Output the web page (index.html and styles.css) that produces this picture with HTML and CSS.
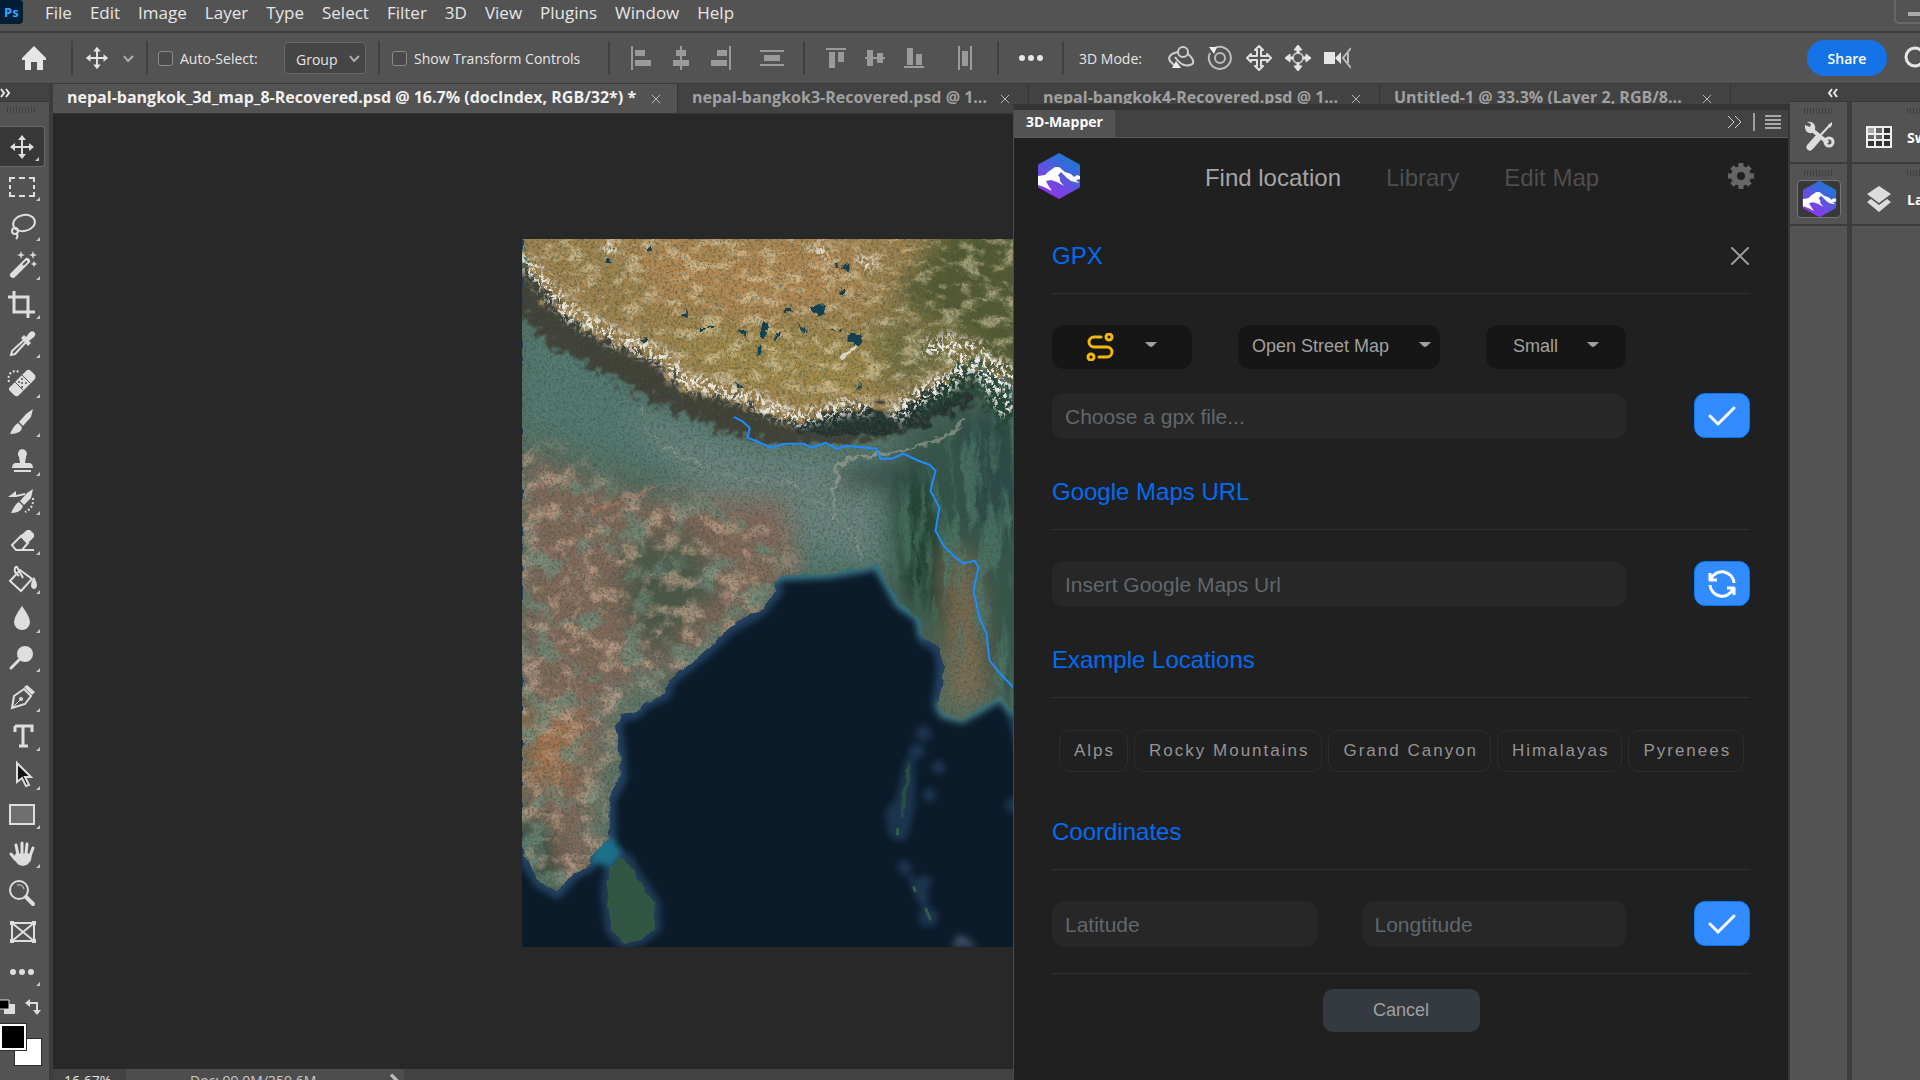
FILE: index.html
```html
<!DOCTYPE html>
<html lang="en">
<head>
  <meta charset="utf-8">
  <title>3D-Mapper</title>
  <link rel="stylesheet" href="styles.css">
</head>
<body>
  <!-- Shared symbols -->
  <svg class="defs" width="0" height="0" aria-hidden="true">
    <defs>
      <linearGradient id="logoFill" x1="0.2" y1="1" x2="0.8" y2="0">
        <stop offset="0" stop-color="#9a2fee"/>
        <stop offset="0.5" stop-color="#5a55de"/>
        <stop offset="1" stop-color="#0f80d0"/>
      </linearGradient>
    </defs>
    <symbol id="logo" viewBox="0 0 44 48">
      <path d="M22 1 42 12Q43 12.500 43 14V34Q43 35.500 42 36L22 47 2 36Q1 35.500 1 34V14Q1 12.500 2 12Z" fill="url(#logoFill)"/>
      <path d="M1 24 8 23 11 20 18 15 22 15 28 20 34 22 37 25 40 23 43 24 43 27 39 28 42 31 34 29 30 26 24 20 21 23 23 26 23 29 27 34 20 30 14 28 9 29 11 33 15 39 7 35 1 33Z" fill="#fff"/>
    </symbol>
    <symbol id="move" viewBox="0 0 30 30">
      <path d="M15 7V23M7 15H23" stroke="currentColor" stroke-width="2"/>
      <path d="M15 3 19 8H11ZM15 27 11 22H19ZM3 15 8 11V19ZM27 15 22 19V11Z" fill="currentColor"/>
    </symbol>
    <symbol id="check" viewBox="0 0 30 30">
      <path d="M3 15 11 23 27 7" fill="none" stroke="#fff" stroke-width="3" stroke-linecap="round" stroke-linejoin="round"/>
    </symbol>
    <symbol id="caret" viewBox="0 0 12 6">
      <path d="M0 0H12L8 4Q6 6 4 4Z" fill="currentColor"/>
    </symbol>
    <symbol id="close" viewBox="0 0 12 12">
      <path d="M1 1 11 11M11 1 1 11" stroke="currentColor" fill="none"/>
    </symbol>
  </svg>

  <div class="app">
    <header class="menubar">
      <div class="ps-logo">Ps</div>
      <nav class="menu">
        <a href="#">File</a>
        <a href="#">Edit</a>
        <a href="#">Image</a>
        <a href="#">Layer</a>
        <a href="#">Type</a>
        <a href="#">Select</a>
        <a href="#">Filter</a>
        <a href="#">3D</a>
        <a href="#">View</a>
        <a href="#">Plugins</a>
        <a href="#">Window</a>
        <a href="#">Help</a>
      </nav>
      <button class="minimize" aria-label="Minimize"></button>
    </header>

    <div class="options">
      <div class="opt-group opt-home">
        <button class="icon-btn" aria-label="Home">
          <svg width="26" height="26" viewBox="0 0 26 26"><path d="M13 1 25 13V15H22V25H16V17H10V25H4V15H1V13Z" fill="currentColor"/></svg>
        </button>
      </div>
      <div class="opt-group opt-move">
        <button class="icon-btn" aria-label="Move tool presets">
          <svg width="28" height="28"><use href="#move"/></svg>
          <svg width="11" height="7" viewBox="0 0 11 7"><path d="M1 1 5 6 10 1" fill="none" stroke="#b0b0b0" stroke-width="2"/></svg>
        </button>
      </div>
      <div class="opt-group opt-auto">
        <label class="check"><input type="checkbox">Auto-Select:</label>
        <div class="group-select">
          <select aria-label="Auto-select target"><option>Group</option></select>
          <svg width="11" height="7" viewBox="0 0 11 7"><path d="M1 1 5 6 10 1" fill="none" stroke="#b0b0b0" stroke-width="2"/></svg>
        </div>
      </div>
      <div class="opt-group opt-transform">
        <label class="check"><input type="checkbox">Show Transform Controls</label>
      </div>
      <div class="opt-group opt-align">
        <button class="icon-btn" aria-label="Align left"><svg width="24" height="30" viewBox="0 0 24 30"><path d="M2 3V27" stroke="#9a9a9a" stroke-width="2"/><path d="M5 7H15V13H5ZM5 17H21V23H5Z" fill="#9a9a9a"/></svg></button>
        <button class="icon-btn" aria-label="Align centers"><svg width="24" height="30" viewBox="0 0 24 30"><path d="M12 3V27" stroke="#9a9a9a" stroke-width="2"/><path d="M7 7H17V13H7ZM4 17H20V23H4Z" fill="#9a9a9a"/></svg></button>
        <button class="icon-btn" aria-label="Align right"><svg width="24" height="30" viewBox="0 0 24 30"><path d="M22 3V27" stroke="#9a9a9a" stroke-width="2"/><path d="M9 7H19V13H9ZM3 17H19V23H3Z" fill="#9a9a9a"/></svg></button>
        <button class="icon-btn distribute" aria-label="Distribute"><svg width="26" height="30" viewBox="0 0 26 30"><path d="M1 8H25M1 22H25" stroke="#9a9a9a" stroke-width="2"/><path d="M5 12H21V18H5Z" fill="#9a9a9a"/></svg></button>
      </div>
      <div class="opt-group opt-valign">
        <button class="icon-btn" aria-label="Align top"><svg width="24" height="30" viewBox="0 0 24 30"><path d="M2 6H22" stroke="#9a9a9a" stroke-width="2"/><path d="M5 9H11V25H5ZM14 9H20V19H14Z" fill="#9a9a9a"/></svg></button>
        <button class="icon-btn" aria-label="Align middles"><svg width="24" height="30" viewBox="0 0 24 30"><path d="M2 15H22" stroke="#9a9a9a" stroke-width="2"/><path d="M4 7H10V23H4ZM14 10H20V20H14Z" fill="#9a9a9a"/></svg></button>
        <button class="icon-btn" aria-label="Align bottom"><svg width="24" height="30" viewBox="0 0 24 30"><path d="M2 24H22" stroke="#9a9a9a" stroke-width="2"/><path d="M5 5H11V22H5ZM14 11H20V22H14Z" fill="#9a9a9a"/></svg></button>
        <button class="icon-btn distribute" aria-label="Distribute widths"><svg width="24" height="30" viewBox="0 0 24 30"><path d="M6 3V27M18 3V27" stroke="#9a9a9a" stroke-width="2"/><path d="M9 8H15V23H9Z" fill="#9a9a9a"/></svg></button>
      </div>
      <div class="opt-group opt-more">
        <button class="icon-btn" aria-label="More options"><svg width="26" height="8" viewBox="0 0 26 8"><g fill="currentColor"><circle cx="4" cy="4" r="3"/><circle cx="13" cy="4" r="3"/><circle cx="22" cy="4" r="3"/></g></svg></button>
      </div>
      <div class="opt-group opt-3d">
        <span>3D Mode:</span>
        <button class="icon-btn" aria-label="Orbit"><svg width="28" height="28" viewBox="0 0 28 28" fill="none" stroke="#cfcfcf" stroke-width="2"><circle cx="16" cy="8" r="5"/><path d="M11 8C2 10 1 14 3 17L7 21M21 10C27 15 28 20 23 21 17 23 12 19 8 13"/><path d="M5 24H14L9 17Z" fill="#eee" stroke="none"/></svg></button>
        <button class="icon-btn" aria-label="Roll"><svg width="28" height="28" viewBox="0 0 28 28" fill="none" stroke="#bdbdbd" stroke-width="2"><circle cx="14" cy="14" r="5"/><path d="M9 4A11 11 0 1 1 4 9"/><path d="M3 3H11L8 10Z" fill="#eee" stroke="none"/></svg></button>
        <button class="icon-btn" aria-label="Pan"><svg width="28" height="28" viewBox="0 0 28 28" fill="none" stroke="#e0e0e0" stroke-width="2" stroke-linejoin="round"><path d="M14 2 18 6H16V12H22V10L26 14 22 18V16H16V22H18L14 26 10 22H12V16H6V18L2 14 6 10V12H12V6H10Z"/></svg></button>
        <button class="icon-btn" aria-label="Slide"><svg width="28" height="28" viewBox="0 0 28 28" fill="none" stroke="#bdbdbd" stroke-width="2"><circle cx="14" cy="14" r="5"/><path d="M14 1 18 6H15V9H13V6H10ZM14 27 10 22H13V19H15V22H18ZM1 14 6 10V13H9V15H6V18ZM27 14 22 18V15H19V13H22V10Z" fill="#e6e6e6" stroke="#e6e6e6" stroke-width="1"/></svg></button>
        <button class="icon-btn" aria-label="Camera"><svg width="28" height="28" viewBox="0 0 28 28"><path d="M1 8H12V20H1ZM12 14 18 8V20Z" fill="#e6e6e6"/><path d="M28 4 20 14 28 24M25 9V19" fill="none" stroke="#bdbdbd" stroke-width="2"/></svg></button>
      </div>
      <button class="share">Share</button>
      <button class="icon-btn search" aria-label="Search"><svg width="26" height="26" viewBox="0 0 26 26" fill="none" stroke="currentColor" stroke-width="3"><circle cx="12" cy="12" r="9"/><path d="M18 18 25 25"/></svg></button>
    </div>

    <div class="workspace">
      <aside class="toolbar">
        <div class="dock-head"><svg width="12" height="10" viewBox="0 0 12 10"><path d="M1 1 4 5 1 9M6 1 9 5 6 9" fill="none" stroke="#e6e6e6" stroke-width="2"/></svg></div>
        <div class="grip"></div>
        <div class="tools">
          <button class="tool active" aria-label="Move"><svg viewBox="0 0 30 30"><use href="#move"/></svg></button>
          <button class="tool" aria-label="Marquee"><svg viewBox="0 0 30 30"><path d="M3 10V6H8M12 6H18M22 6H27V10M27 13V17M27 20V24H22M18 24H12M8 24H3V20M3 17V13" fill="none" stroke="currentColor" stroke-width="2"/></svg></button>
          <button class="tool" aria-label="Lasso"><svg viewBox="0 0 30 30" fill="none" stroke="currentColor" stroke-width="2"><ellipse cx="17" cy="12" rx="11" ry="8" transform="rotate(-12 17 12)"/><circle cx="8" cy="20" r="3"/><path d="M9 22Q12 25 9 28"/></svg></button>
          <button class="tool" aria-label="Magic wand"><svg viewBox="0 0 30 30"><path d="M6 25 20 11" stroke="currentColor" stroke-width="6" stroke-linecap="round"/><path d="M16 15 20 11" stroke="#535353" stroke-width="2"/><path d="M14 1 15 4 18 5 15 6 14 9 13 6 10 5 13 4ZM26 1 27 4 30 5 27 6 26 9 25 6 22 5 25 4ZM27 11 28 13 30 14 28 15 27 17 26 15 24 14 26 13Z" fill="currentColor"/></svg></button>
          <button class="tool" aria-label="Crop"><svg viewBox="0 0 30 30"><path d="M7 1V22H28M1 7H21V28" fill="none" stroke="currentColor" stroke-width="3"/></svg></button>
          <button class="tool" aria-label="Eyedropper"><svg viewBox="0 0 30 30"><path d="M17 11 5 22 4 26 8 25 19 13" fill="none" stroke="currentColor" stroke-width="2"/><path d="M14 9 17 6 19 8 23 3Q26 1 28 4 29 6 27 8L22 12 24 14 21 17Z" fill="currentColor"/></svg></button>
          <button class="tool" aria-label="Healing brush"><svg viewBox="0 0 30 30"><path d="M2 20 20 2Q22 1 24 3L28 7Q29 9 28 11L11 28Q9 29 7 27L2 22Z" fill="currentColor"/><path d="M8 14 16 22M15 7 23 15" stroke="#535353"/><g fill="#535353"><circle cx="15" cy="11" r="1"/><circle cx="12" cy="14" r="1"/><circle cx="15" cy="15" r="1"/><circle cx="19" cy="15" r="1"/><circle cx="15" cy="19" r="1"/></g><path d="M2 14C0 6 5 1 13 4" fill="none" stroke="currentColor" stroke-width="2" stroke-dasharray="2 2"/></svg></button>
          <button class="tool" aria-label="Brush"><svg viewBox="0 0 30 30"><path d="M26 2 24 10 16 19 12 15 19 7ZM11 16 15 20Q15 27 3 27 7 18 11 16Z" fill="currentColor"/></svg></button>
          <button class="tool" aria-label="Clone stamp"><svg viewBox="0 0 30 30"><path d="M15 3A5 5 0 0 1 19 11L18 17H23Q26 18 26 22H5Q5 18 8 17H13L12 11A5 5 0 0 1 15 3ZM7 24H24V26H7Z" fill="currentColor"/></svg></button>
          <button class="tool" aria-label="History brush"><svg viewBox="0 0 30 30"><path d="M26 3 24 12 17 19 13 15 20 7ZM12 16 16 20Q14 27 4 27 8 18 12 16ZM1 11 9 5V9L18 7V9L9 11Z" fill="currentColor"/><path d="M26 12Q27 22 18 26" fill="none" stroke="currentColor" stroke-width="2" stroke-dasharray="2 2"/></svg></button>
          <button class="tool" aria-label="Eraser"><svg viewBox="0 0 30 30"><path d="M5 20 14 11 21 18 15 25H9Z" fill="none" stroke="currentColor" stroke-width="2"/><path d="M13 11 20 5H23L27 9V12L20 19ZM9 24H27V26H9Z" fill="currentColor"/></svg></button>
          <button class="tool" aria-label="Paint bucket"><svg viewBox="0 0 30 30" fill="none" stroke="currentColor" stroke-width="2"><path d="M13 6 25 15 14 27 3 17Z"/><path d="M16 14 10 3Q7 2 8 8L12 12"/><path d="M27 15Q31 23 27 24 23 23 27 15Z" fill="currentColor"/></svg></button>
          <button class="tool" aria-label="Blur"><svg viewBox="0 0 30 30"><path d="M15 3Q23 14 23 19A8 8 0 0 1 7 19Q7 14 15 3Z" fill="currentColor"/></svg></button>
          <button class="tool" aria-label="Dodge"><svg viewBox="0 0 30 30"><circle cx="18" cy="11" r="8" fill="currentColor"/><path d="M12 17 4 25" stroke="currentColor" stroke-width="3" stroke-linecap="round"/></svg></button>
          <button class="tool" aria-label="Pen"><svg viewBox="0 0 30 30"><path d="M5 26 7 14 17 7 24 14 18 22Z" fill="none" stroke="currentColor" stroke-width="2"/><path d="M17 5 20 3 28 10 25 13Z" fill="currentColor"/><circle cx="14" cy="17" r="2" fill="currentColor"/><path d="M5 26 14 17" stroke="currentColor"/></svg></button>
          <button class="tool" aria-label="Type"><svg viewBox="0 0 30 30"><path d="M8 5H25V11M8 11V5M16 5V25M12 25H21" fill="none" stroke="currentColor" stroke-width="3"/></svg></button>
          <button class="tool" aria-label="Path selection"><svg viewBox="0 0 30 30"><path d="M10 3V22L15 18 19 26 22 25 18 17H24Z" fill="#111" stroke="currentColor" stroke-width="2"/></svg></button>
          <button class="tool" aria-label="Rectangle"><svg viewBox="0 0 30 30"><path d="M3 5H27V24H3Z" fill="#6e6e6e" stroke="currentColor" stroke-width="2"/></svg></button>
          <button class="tool" aria-label="Hand"><svg viewBox="0 0 30 30" fill="none" stroke="currentColor" stroke-width="3" stroke-linecap="round"><path d="M11 16 9 6M15 15V4M19 15 20 5M23 17 26 9M8 20 4 15"/><path d="M9 15H24Q25 24 18 26 11 28 7 19Z" fill="currentColor" stroke-width="1"/></svg></button>
          <button class="tool no-sub" aria-label="Zoom"><svg viewBox="0 0 30 30" fill="none" stroke="currentColor"><circle cx="12" cy="12" r="9" stroke-width="2"/><path d="M19 19 26 26" stroke-width="4" stroke-linecap="round"/><path d="M10 7Q16 6 17 11"/></svg></button>
          <button class="tool no-sub" aria-label="Frame"><svg viewBox="0 0 30 30"><path d="M5 6H27V24H5ZM5 6 27 24M27 6 5 24" fill="none" stroke="currentColor" stroke-width="2"/><path d="M3 4H7V8H3ZM25 4H29V8H25ZM3 22H7V26H3ZM25 22H29V26H25Z" fill="currentColor"/></svg></button>
          <button class="tool" aria-label="Edit toolbar"><svg viewBox="0 0 30 30" fill="currentColor"><circle cx="6" cy="15" r="3"/><circle cx="15" cy="15" r="3"/><circle cx="24" cy="15" r="3"/></svg></button>
        </div>
        <div class="color-tools">
          <svg width="16" height="16" viewBox="0 0 16 16"><path d="M4 5H15V15H4Z" fill="#ddd"/><path d="M-1 1H9V10H-1Z" fill="#000" stroke="#ddd"/></svg>
          <svg width="16" height="16" viewBox="0 0 16 16"><path d="M4 4H12V12" fill="none" stroke="#ddd" stroke-width="2"/><path d="M0 4 5 0V8ZM12 16 8 11H16Z" fill="#ddd"/></svg>
        </div>
        <div class="swatches">
          <button class="swatch back" aria-label="Background color"></button>
          <button class="swatch fore" aria-label="Foreground color"></button>
        </div>
      </aside>

      <main class="document">
        <div class="tabs">
          <div class="tab tab-wide active"><span>nepal-bangkok_3d_map_8-Recovered.psd @ 16.7% (docIndex, RGB/32*) *</span><button aria-label="Close tab"><svg width="10" height="10"><use href="#close"/></svg></button></div>
          <div class="tab"><span>nepal-bangkok3-Recovered.psd @ 1...</span><button aria-label="Close tab"><svg width="10" height="10"><use href="#close"/></svg></button></div>
          <div class="tab"><span>nepal-bangkok4-Recovered.psd @ 1...</span><button aria-label="Close tab"><svg width="10" height="10"><use href="#close"/></svg></button></div>
          <div class="tab"><span>Untitled-1 @ 33.3% (Layer 2, RGB/8...</span><button aria-label="Close tab"><svg width="10" height="10"><use href="#close"/></svg></button></div>
        </div>

        <div class="canvas">
          <svg class="map" viewBox="0 0 800 709" role="img" aria-label="Satellite map with route">
            <defs>
              <filter id="soft" x="-20%" y="-20%" width="140%" height="140%"><feGaussianBlur stdDeviation="12"/></filter>
              <filter id="soft2" x="-20%" y="-20%" width="140%" height="140%"><feGaussianBlur stdDeviation="3"/></filter>
              <!-- ragged edge for ridges -->
              <filter id="rough" x="-10%" y="-10%" width="120%" height="120%">
                <feTurbulence type="fractalNoise" baseFrequency="0.12" numOctaves="5" seed="4" result="n"/>
                <feDisplacementMap in="SourceGraphic" in2="n" scale="34" xChannelSelector="R" yChannelSelector="G"/>
                <feGaussianBlur stdDeviation="1"/>
              </filter>
              <filter id="coastEdge" x="-5%" y="-5%" width="110%" height="110%">
                <feTurbulence type="fractalNoise" baseFrequency="0.08" numOctaves="3" seed="9" result="n"/>
                <feDisplacementMap in="SourceGraphic" in2="n" scale="7" xChannelSelector="R" yChannelSelector="G"/>
              </filter>
              <!-- speckle that is densest in the middle of a blurred stroke -->
              <filter id="snowy" x="-10%" y="-10%" width="120%" height="120%">
                <feGaussianBlur in="SourceGraphic" stdDeviation="4" result="b"/>
                <feTurbulence type="fractalNoise" baseFrequency="0.26 0.2" numOctaves="4" seed="7" result="n"/>
                <feColorMatrix in="n" type="matrix" values="0 0 0 0 0.84  0 0 0 0 0.83  0 0 0 0 0.8  8 0 0 0 -3.9" result="s"/>
                <feComposite in="s" in2="b" operator="in"/>
              </filter>
              <filter id="grain" x="0" y="0" width="100%" height="100%">
                <feTurbulence type="fractalNoise" baseFrequency="0.4" numOctaves="4" seed="3"/>
                <feColorMatrix type="matrix" values="0 0 0 0 0.05  0 0 0 0 0.09  0 0 0 0 0.06  3 0 0 0 -1.3"/>
              </filter>
              <filter id="blotch" x="0" y="0" width="100%" height="100%">
                <feTurbulence type="fractalNoise" baseFrequency="0.03 0.035" numOctaves="7" seed="12"/>
                <feColorMatrix type="matrix" values="0 0 0 0 0.16  0 0 0 0 0.27  0 0 0 0 0.21  0 5 0 0 -2.6"/>
              </filter>
              <filter id="clay" x="0" y="0" width="100%" height="100%">
                <feTurbulence type="fractalNoise" baseFrequency="0.05 0.06" numOctaves="7" seed="31"/>
                <feColorMatrix type="matrix" values="0 0 0 0 0.66  0 0 0 0 0.44  0 0 0 0 0.32  0 4 0 0 -1.9"/>
              </filter>
              <filter id="light" x="0" y="0" width="100%" height="100%">
                <feTurbulence type="fractalNoise" baseFrequency="0.05 0.09" numOctaves="6" seed="21"/>
                <feColorMatrix type="matrix" values="0 0 0 0 0.86  0 0 0 0 0.72  0 0 0 0 0.46  0 0 4 0 -1.9"/>
              </filter>
              <!-- north-south hill ranges -->
              <filter id="ranges" x="0" y="0" width="100%" height="100%">
                <feTurbulence type="fractalNoise" baseFrequency="0.09 0.015" numOctaves="5" seed="17"/>
                <feColorMatrix type="matrix" values="0 0 0 0 0.08  0 0 0 0 0.2  0 0 0 0 0.15  0 5 0 0 -2.3"/>
              </filter>
              <path id="coast" d="M0-20V600L2 619 18 644 35 654 52 635 68 627 67 619 88 599 87 562 99 539 97 512 94 489 98 475 112 475 122 465 143 455 147 442 162 430 182 414 208 389 238 372 255 352 250 343 258 337 305 335 342 329 355 325 365 342 378 365 398 379 402 399 418 409 422 429 417 465 422 475 440 480 455 472 480 457 492 475 505 520 800 560V-20Z"/>
              <path id="lanka" d="M95 617 104 621 112 635 132 665 133 689 120 700 102 704 90 692 85 655 88 632Z"/>
              <path id="plateau" d="M0-20V22L38 72 88 102 138 125 162 152 202 159 228 165 248 175 278 182 295 174 325 169 348 165 372 175 395 155 422 142 455 119 491 145 800 145V-20Z"/>
              <clipPath id="landClip"><use href="#coast"/><use href="#lanka"/></clipPath>
              <clipPath id="plateauClip"><use href="#plateau"/></clipPath>
              <mask id="indiaMask" maskUnits="userSpaceOnUse" x="0" y="0" width="500" height="709"><path d="M-20 200Q60 215 110 250L180 260 260 290 270 330 240 390 160 440 95 480 90 530 80 650H-20Z" fill="#fff" filter="url(#soft)"/></mask>
              <mask id="eastMask" maskUnits="userSpaceOnUse" x="300" y="0" width="500" height="709"><path d="M365 260 420 200 480 160 820 150V540L490 480 430 400 370 340Z" fill="#fff" filter="url(#soft)"/></mask>
            </defs>
            <rect width="800" height="709" fill="#0c1b29"/>
            <!-- shallow water -->
            <g fill="none" stroke-linejoin="round" filter="url(#soft2)">
              <use href="#coast" stroke="#233f5f" stroke-width="13"/>
              <use href="#lanka" stroke="#203a57" stroke-width="13"/>
              <path d="M250 343 258 337 305 335 342 329 355 325 365 342 378 365 398 379 402 399" stroke="#3b8288" stroke-width="6"/>
              <path d="M417 465 422 475 440 480 455 472 480 457 492 475" stroke="#4b8b84" stroke-width="5"/>
              <path d="M74 602 90 599 100 612 90 628 68 624Z" fill="#1f6f88"/>
            </g>
            <g fill="#1a3450" filter="url(#soft2)">
              <circle cx="402" cy="495" r="8"/><circle cx="395" cy="513" r="8"/>
              <circle cx="417" cy="529" r="7"/><circle cx="408" cy="557" r="7"/>
              <path d="M384 520Q395 515 394 535L393 570 386 600Q372 608 366 592L364 572 374 562Z"/>
              <circle cx="383" cy="629" r="7"/><circle cx="403" cy="644" r="7"/><circle cx="407" cy="679" r="10"/>
              <path d="M384 632 396 664 407 675 407 650Z"/>
              <path d="M430 709 436 696 444 698 456 709Z" fill="#3a4a60"/>
              <circle cx="492" cy="567" r="8"/>
            </g>
            <path d="M388 525 384 550 380 578" fill="none" stroke="#28503f" stroke-width="4" filter="url(#coastEdge)"/>
            <path d="M376 590V597M404 670 409 682M392 648 394 654" stroke="#2f5d4c" stroke-width="3"/>

            <g filter="url(#coastEdge)">
            <g clip-path="url(#landClip)">
              <rect y="-20" width="800" height="740" fill="#536b60"/>
              <g filter="url(#soft)">
                <path d="M0 50 120 150 240 200 380 205 370 330 250 340 180 250 0 190Z" fill="#557a73"/>
                <path d="M100 170 240 215 360 220 355 320 300 310 180 260Z" fill="#6b837e"/>
                <path d="M0 215 110 260 260 260 280 330 160 430 90 470 80 640 0 640Z" fill="#83695a"/>
                <path d="M0 480 60 470 50 540 0 550Z" fill="#a57350"/>
                <path d="M100 300 170 290 200 350 130 430 100 370Z" fill="#4e5948"/>
                <path d="M85 450 150 430 120 465 90 540 90 600 60 610 80 500Z" fill="#66786c"/>
                <path d="M0 570 30 590 40 650 0 640Z" fill="#2d4a3c"/>
                <path d="M365 250 385 200 500 150 800 140V500L480 470 440 400 380 370Z" fill="#34554b"/>
                <path d="M375 260 410 240 420 300 425 440 410 390 375 340Z" fill="#1b3f2e"/>
                <path d="M425 310 450 320 465 460 430 470Z" fill="#866f52"/>
                <path d="M430 170 500 190 500 310 450 290Z" fill="#2b4a47"/>
                <path d="M320 228H400V248H320Z" fill="#243a36"/>
                <use href="#lanka" fill="#2f5942"/>
              </g>
              <g mask="url(#indiaMask)">
                <rect width="500" height="709" filter="url(#clay)" opacity="0.6"/>
                <rect width="500" height="709" filter="url(#blotch)" opacity="0.7"/>
              </g>
              <g mask="url(#eastMask)">
                <rect x="300" width="500" height="709" filter="url(#ranges)" opacity="0.7"/>
              </g>
              <!-- dark foothills under the ridge -->
              <path d="M-10 40 45 95 100 122 145 147 190 167 250 188 300 190 350 182 400 160 450 145" fill="none" stroke="#3f3a33" stroke-width="38" filter="url(#rough)" opacity="0.9"/>
              <path d="M280 192 350 187 400 168 450 150" fill="none" stroke="#22312e" stroke-width="32" filter="url(#rough)"/>
              <g filter="url(#rough)">
                <use href="#plateau" fill="#a1834f"/>
              </g>
              <g clip-path="url(#plateauClip)">
                <g filter="url(#soft)">
                  <path d="M100 0H340V60L240 80 130 60Z" fill="#b48953"/>
                  <path d="M130 90 360 100 340 160 220 150Z" fill="#a48b4c"/>
                  <path d="M370 60 430-20H800V150H480L440 95Z" fill="#545a31"/>
                  <path d="M350 80 450 90 420 140 360 150Z" fill="#74713f"/>
                </g>
                <rect width="500" height="200" filter="url(#light)" opacity="0.5"/>
              </g>
              <rect width="800" height="709" filter="url(#grain)" opacity="0.55"/>
              <path d="M400 175 440 125 460 125 500 170 480 190 450 150Z" fill="#234233" filter="url(#rough)" opacity="0.8"/>
              <!-- snow -->
              <g fill="none" stroke="#fff" filter="url(#snowy)">
                <path d="M0 16 30 55 50 75 88 96 138 116 162 142 202 152 228 160 248 170 278 180 325 168 350 168" stroke-width="17"/>
                <path d="M370 178 400 155 435 138 450 112 400 108M420 102 455 115 500 145M455 120 480 160 490 175" stroke-width="20"/>
                <path d="M80 5 95 15M335 20 355 30M295 5 305 18" stroke-width="12"/>
              </g>
              <path d="M320 120 334 106" stroke="#d9d4c6" stroke-width="3"/>
              <!-- lakes -->
              <g fill="#12404f" filter="url(#coastEdge)">
                <path d="M286 70 300 66 306 74 296 80ZM326 96H342L334 106 326 105ZM240 84H246L242 98H238ZM215 92 225 94 224 101ZM118 99 128 98 124 104ZM158 76 166 74V79ZM181 87H190V90H181ZM275 85 286 92 285 95ZM262 71H270V74H262ZM320 28 328 22V29ZM54 13 66 20ZM125 8H132V12H125ZM330 152 340 146V150ZM215 145H221V149H215Z"/>
                <path d="M252 90 260 94 252 98ZM308 92H318V94H308ZM86 20H90V24H86ZM314 24H318V29H314ZM316 50H322V53H316ZM236 108H240V114H236Z"/>
              </g>
              <!-- rivers -->
              <g fill="none" stroke="#a3a596" opacity="0.6" filter="url(#coastEdge)">
                <path d="M120 165 122 190 140 205 195 235 240 242 270 245 310 275 335 300 340 325"/>
                <path d="M445 180 420 200 370 215 335 218 316 228 312 250 314 278" stroke-width="3"/>
                <path d="M70 275 130 248" stroke="#b07a5a" stroke-width="2"/>
              </g>
              <use href="#lanka" fill="#2f5743"/>
              <rect x="80" y="610" width="60" height="99" filter="url(#grain)" opacity="0.4"/>
            </g>
            </g>
            <path class="route" d="M212 178 220 182 228 189 226 199 236 203 250 209 262 205 282 205 290 209 304 204 315 210 325 207 355 210 359 220 370 220 382 215 397 222 408 226 414 232 409 252 418 269 414 292 422 307 432 317 442 325 453 322 457 329 452 352 458 379 465 395 468 422 477 433 490 447 520 470"/>
          </svg>
        </div>

        <div class="status">
          <span class="zoom">16.67%</span>
          <span class="doc-size">Doc: 99.9M/359.6M</span>
          <svg width="8" height="12" viewBox="0 0 8 12"><path d="M1 1 6 6 1 11" fill="none" stroke="#bbb" stroke-width="2"/></svg>
        </div>

        <section class="panel">
          <div class="panel-tabs">
            <div class="panel-tab">3D-Mapper</div>
            <div class="panel-actions">
              <svg width="16" height="14" viewBox="0 0 16 14"><path d="M1 1 7 7 1 13M8 1 14 7 8 13" fill="none" stroke="currentColor"/></svg>
              <span class="bar"></span>
              <svg width="16" height="14" viewBox="0 0 16 14"><path d="M0 1H16M0 5H16M0 9H16M0 13H16" stroke="#a8a8a8" stroke-width="2"/></svg>
            </div>
          </div>

          <div class="panel-body">
            <div class="panel-head">
              <svg width="44" height="48"><use href="#logo"/></svg>
              <nav class="panel-nav">
                <a href="#" class="current">Find location</a>
                <a href="#">Library</a>
                <a href="#">Edit Map</a>
              </nav>
              <button class="gear" aria-label="Settings">
                <svg width="28" height="28" viewBox="0 0 28 28"><circle cx="14" cy="14" r="7" fill="none" stroke="#666" stroke-width="6"/><g stroke="#666" stroke-width="5"><path d="M14 1V5M14 23V27M1 14H5M23 14H27M5 5 8 8M20 20 23 23M5 23 8 20M20 8 23 5"/></g></svg>
              </button>
            </div>

            <form class="sections">
              <section class="section">
                <div class="section-title">
                  <h2>GPX</h2>
                  <button type="button" class="dismiss" aria-label="Close"><svg width="20" height="20" viewBox="0 0 20 20"><path d="M2 2 18 18M18 2 2 18" stroke="#9b9b9b" stroke-width="2" stroke-linecap="round"/></svg></button>
                </div>
                <div class="selects">
                  <div class="dropdown route-style">
                    <svg class="route-icon" width="28" height="28" viewBox="0 0 28 28" fill="none" stroke="#f5b80c" stroke-width="3" stroke-linecap="round"><circle cx="23" cy="4" r="3"/><circle cx="5" cy="24" r="3"/><path d="M15 4H8A5 5 0 0 0 8 14H21A5 5 0 0 1 21 24H13"/></svg>
                    <select aria-label="Route style"><option></option></select>
                    <svg class="caret" width="12" height="6"><use href="#caret"/></svg>
                  </div>
                  <div class="dropdown provider">
                    <select aria-label="Map provider"><option>Open Street Map</option></select>
                    <svg class="caret" width="12" height="6"><use href="#caret"/></svg>
                  </div>
                  <div class="dropdown size">
                    <select aria-label="Size"><option>Small</option></select>
                    <svg class="caret" width="12" height="6"><use href="#caret"/></svg>
                  </div>
                </div>
                <div class="row">
                  <div class="fields"><input type="text" aria-label="GPX file" placeholder="Choose a gpx file..."></div>
                  <button type="button" class="go" aria-label="Load file"><svg width="30" height="30"><use href="#check"/></svg></button>
                </div>
              </section>

              <section class="section">
                <div class="section-title"><h2>Google Maps URL</h2></div>
                <div class="row">
                  <div class="fields"><input type="text" aria-label="Google Maps URL" placeholder="Insert Google Maps Url"></div>
                  <button type="button" class="go" aria-label="Load URL"><svg width="30" height="30" viewBox="0 0 30 30" fill="none" stroke="#fff" stroke-width="3" stroke-linejoin="round"><path d="M3 4V11H10M4 10A12 12 0 0 1 27 14M27 26V19H20M26 20A12 12 0 0 1 3 16"/></svg></button>
                </div>
              </section>

              <section class="section">
                <div class="section-title"><h2>Example Locations</h2></div>
                <div class="chips">
                  <button type="button">Alps</button>
                  <button type="button">Rocky Mountains</button>
                  <button type="button">Grand Canyon</button>
                  <button type="button">Himalayas</button>
                  <button type="button">Pyrenees</button>
                </div>
              </section>

              <section class="section">
                <div class="section-title"><h2>Coordinates</h2></div>
                <div class="row">
                  <div class="fields">
                    <input type="text" aria-label="Latitude" placeholder="Latitude">
                    <input type="text" aria-label="Longtitude" placeholder="Longtitude">
                  </div>
                  <button type="button" class="go" aria-label="Go to coordinates"><svg width="30" height="30"><use href="#check"/></svg></button>
                </div>
              </section>

              <div class="footer"><button type="button" class="cancel">Cancel</button></div>
            </form>
          </div>
        </section>
      </main>

      <aside class="dock">
        <div class="dock-head"><svg width="12" height="10" viewBox="0 0 12 10"><path d="M5 1 2 5 5 9M10 1 7 5 10 9" fill="none" stroke="#e6e6e6" stroke-width="2"/></svg></div>
        <div class="dock-columns">
          <div class="dock-col narrow">
            <div class="dock-cell">
              <div class="grip"></div>
              <button class="dock-btn" aria-label="Tool presets"><svg width="32" height="32" viewBox="0 0 32 32"><path d="M8 8 25 22" stroke="#ddd" stroke-width="4"/><path d="M2 4 7 6 8 3 4 1Q10 0 12 5 13 9 9 12 3 13 2 7Z" fill="#ddd"/><circle cx="26" cy="21" r="4" fill="none" stroke="#ddd" stroke-width="3"/><path d="M7 26 14 18" stroke="#ddd" stroke-width="7" stroke-linecap="round"/><path d="M14 18 27 4" stroke="#ddd" stroke-width="2"/><path d="M25 4 29 1 29 4 27 7Z" fill="#ddd"/></svg></button>
            </div>
            <div class="dock-cell">
              <div class="grip"></div>
              <button class="dock-btn pressed" aria-label="3D-Mapper"><svg width="35" height="38"><use href="#logo"/></svg></button>
            </div>
          </div>
          <div class="dock-col">
            <div class="dock-cell">
              <div class="grip"></div>
              <button class="dock-btn labelled"><svg width="26" height="22" viewBox="0 0 26 22"><path d="M1 1H25V21H1Z" fill="#333" stroke="#eee" stroke-width="2"/><path d="M2 2H9V8H2Z" fill="#aaa"/><path d="M9 2H17V14H2V8H9Z" fill="#666"/><path d="M1 8H25M1 14H25M9 1V21M17 1V21" stroke="#eee" stroke-width="2"/></svg>Swatches</button>
            </div>
            <div class="dock-cell">
              <div class="grip"></div>
              <button class="dock-btn labelled"><svg width="26" height="26" viewBox="0 0 26 26"><path d="M13 0 25 8 13 17 1 8ZM1 16 5 13 13 19 21 13 25 16 13 26Z" fill="#ddd"/></svg>Layers</button>
            </div>
          </div>
        </div>
      </aside>
    </div>
  </div>
</body>
</html>
```
FILE: styles.css
```css
* {
  box-sizing: border-box;
}

body {
  margin: 0;
  background: #535353;
  color: #e6e6e6;
  font-family: "Open Sans", "Noto Sans", sans-serif;
  font-size: 14px;
  overflow: hidden;
}

button,
input,
select {
  font: inherit;
  color: inherit;
  margin: 0;
}

button {
  background: none;
  border: none;
  padding: 0;
  cursor: pointer;
}

a {
  color: inherit;
  text-decoration: none;
}

svg {
  display: block;
  flex: none;
}

.defs {
  position: absolute;
}

.app {
  display: flex;
  flex-direction: column;
  height: 100vh;
}

/* Menu bar */
.menubar {
  display: flex;
  align-items: flex-start;
  height: 33px;
  border-bottom: 2px solid #3c3c3c;
  overflow: hidden;
}

.ps-logo {
  width: 23px;
  height: 24px;
  background: #001e36;
  color: #31a8ff;
  border-radius: 0 4px 4px 0;
  font-size: 13px;
  font-weight: 700;
  line-height: 24px;
  padding-left: 4px;
}

.menu {
  display: flex;
  gap: 18px;
  margin-left: 22px;
  font-size: 17px;
  line-height: 26px;
}

.minimize {
  width: 26px;
  height: 24px;
  margin-left: auto;
  border: 2px solid #686868;
  border-width: 0 0 2px 2px;
  border-radius: 0 0 0 5px;
  display: flex;
  justify-content: flex-end;
  align-items: center;
  padding-top: 5px;
}

.minimize::after {
  content: "";
  width: 12px;
  height: 4px;
  background: #aaa;
}

/* Options bar */
.options {
  display: flex;
  align-items: center;
  height: 51px;
  flex: none;
  border-bottom: 1px solid #3c3c3c;
  overflow: hidden;
}

.opt-group {
  display: flex;
  align-items: center;
  height: 34px;
  border-right: 2px solid #404040;
  flex: none;
}

.icon-btn {
  display: flex;
  align-items: center;
  gap: 12px;
  flex: none;
}

.opt-home {
  width: 73px;
  padding-left: 21px;
}

.opt-move {
  width: 75px;
  padding-left: 10px;
}

.opt-auto {
  width: 232px;
  padding-left: 10px;
  justify-content: space-between;
  padding-right: 12px;
}

.opt-transform {
  width: 230px;
  padding-left: 12px;
}

.opt-align {
  width: 195px;
  padding-left: 20px;
  gap: 15px;
}

.opt-valign {
  width: 194px;
  padding-left: 19px;
  gap: 15px;
}

.opt-align .distribute {
  margin-left: 12px;
}

.opt-valign .distribute {
  margin-left: 12px;
}

.opt-more {
  width: 65px;
  padding-left: 19px;
}

.opt-3d {
  border: none;
  padding-left: 15px;
  gap: 11px;
}

.opt-3d span {
  margin-right: 14px;
}

.check {
  display: flex;
  align-items: center;
  gap: 7px;
  white-space: nowrap;
}

.check input {
  appearance: none;
  width: 15px;
  height: 15px;
  border: 1px solid #8a8a8a;
  border-radius: 3px;
  background: #4a4a4a;
}

.group-select {
  display: flex;
  align-items: center;
  width: 82px;
  height: 32px;
  padding-right: 5px;
  border: 1px solid #686868;
  border-radius: 4px;
  background: #454545;
}

.group-select select {
  appearance: none;
  flex: 1;
  min-width: 0;
  height: 100%;
  border: none;
  background: none;
  padding: 2px 0 0 11px;
}

.share {
  width: 80px;
  height: 36px;
  margin-left: auto;
  border-radius: 18px;
  background: #1473e6;
  color: #fff;
  font-weight: 600;
}

.search {
  margin: 0 -9px 0 16px;
  flex: none;
}

/* Workspace */
.workspace {
  display: flex;
  flex: 1;
  min-height: 0;
}

.dock-head {
  height: 18px;
  padding-top: 4px;
  background: #424242;
  border-bottom: 1px solid #383838;
}

.grip {
  height: 6px;
  background: repeating-linear-gradient(90deg, #404040 0 1px, transparent 1px 3px);
}

.toolbar {
  width: 53px;
  flex: none;
  border-right: 4px solid #3c3c3c;
  overflow: hidden;
}

.toolbar .grip {
  width: 30px;
  margin: 5px 0 13px 7px;
}

.tools {
  display: flex;
  flex-direction: column;
  height: 865px;
}

.tool {
  flex: 1;
  position: relative;
  width: 45px;
  padding-left: 7px;
  color: #dedede;
}

.tool svg {
  width: 30px;
  height: 30px;
}

.tool.active {
  background: #383838;
  border: 1px solid #686868;
  border-left: none;
  border-radius: 0 4px 4px 0;
}

.tool::after {
  content: "";
  position: absolute;
  right: 5px;
  bottom: 5px;
  border: 2px solid #c8c8c8;
  border-top-color: transparent;
  border-left-color: transparent;
}

.tool.no-sub::after {
  display: none;
}

.color-tools {
  display: flex;
  gap: 9px;
  margin-top: 8px;
}

.swatches {
  position: relative;
  height: 44px;
  margin-top: 8px;
}

.swatch {
  position: absolute;
  width: 28px;
  height: 28px;
  border: 1px solid #2c2c2c;
}

.fore {
  left: -1px;
  top: 0;
  background: #000;
  box-shadow: inset 0 0 0 2px #fff;
}

.back {
  left: 14px;
  top: 15px;
  background: #fff;
}

.document {
  position: relative;
  flex: 1;
  min-width: 0;
  display: flex;
  flex-direction: column;
  background: #282828;
}

.tabs {
  display: flex;
  height: 30px;
  flex: none;
  background: #424242;
  border-bottom: 1px solid #363636;
}

.tab {
  display: flex;
  align-items: center;
  justify-content: space-between;
  width: 351px;
  padding: 0 18px 3px 14px;
  border-right: 1px solid #363636;
  color: #a0a0a0;
  font-size: 16px;
  font-weight: 700;
  white-space: nowrap;
}

.tab-wide {
  width: 625px;
  padding-right: 16px;
}

.tab.active {
  background: #535353;
  color: #f0f0f0;
}

.tab button {
  color: #ccc;
  padding-top: 3px;
}

.canvas {
  flex: 1;
  min-height: 0;
  display: flex;
  align-items: center;
  justify-content: center;
  padding-top: 3px;
}

.map {
  width: 46%;
}

.route {
  fill: none;
  stroke: #1e8cff;
  stroke-width: 2;
  stroke-linejoin: round;
}

.status {
  display: flex;
  height: 11px;
  flex: none;
  background: #424242;
  line-height: 24px;
  overflow: hidden;
}

.zoom {
  width: 73px;
  padding-left: 11px;
}

.doc-size {
  width: 262px;
  padding-left: 64px;
  background: #4d4d4d;
  color: #c8c8c8;
}

.status svg {
  width: 16px;
  background: #4d4d4d;
  padding-top: 4px;
  height: 24px;
}

/* Mapper panel floats over the document */
.panel {
  position: absolute;
  top: 20px;
  right: 0;
  bottom: 0;
  width: 777px;
  display: flex;
  flex-direction: column;
  background: #202020;
  border: 2px solid #383838;
  border-top: 6px solid #343434;
  border-bottom: none;
  border-left: 1px solid #4a4a4a;
  font-family: "Liberation Sans", Arial, sans-serif;
}

.panel-tabs {
  display: flex;
  justify-content: space-between;
  height: 28px;
  flex: none;
  background: #424242;
  border-bottom: 1px solid #5a5a5a;
}

.panel-tab {
  width: 101px;
  background: #535353;
  color: #fff;
  font-family: "Open Sans", "Noto Sans", sans-serif;
  font-weight: 700;
  line-height: 24px;
  text-align: center;
}

.panel-actions {
  display: flex;
  align-items: center;
  gap: 10px;
  padding: 0 7px 3px 0;
  color: #d0d0d0;
}

.bar {
  width: 2px;
  height: 18px;
  background: #a0a0a0;
}

.panel-body {
  flex: 1;
  min-height: 0;
}

.panel-head {
  display: flex;
  align-items: center;
  justify-content: space-between;
  height: 75px;
  padding: 0 29px 0 23px;
}

.panel-nav {
  display: flex;
  gap: 45px;
  padding-top: 4px;
  color: #4e4e4e;
  font-size: 24px;
}

.panel-nav .current {
  color: #a6a6a6;
}

.gear {
  padding: 4px;
}

.sections {
  padding: 28px 38px 0 38px;
}

.section {
  margin-bottom: 38px;
}

.section-title {
  display: flex;
  align-items: center;
  justify-content: space-between;
  padding-bottom: 22px;
  margin-bottom: 31px;
  border-bottom: 1px solid #303030;
}

.section-title h2 {
  margin: 0;
  color: #006cf5;
  font-size: 24px;
  font-weight: 400;
  line-height: 30px;
}

.selects {
  display: flex;
  justify-content: space-between;
  max-width: 574px;
  margin-bottom: 24px;
}

.dropdown {
  position: relative;
  width: 140px;
  height: 44px;
  border-radius: 12px;
  background: #161616;
  color: #a0a0a0;
  font-size: 18px;
}

.dropdown select {
  appearance: none;
  width: 100%;
  height: 42px;
  border: none;
  background: none;
  padding: 0 14px;
}

.size select {
  padding-left: 27px;
}

.provider {
  width: 202px;
}

.caret {
  position: absolute;
  top: 17px;
  right: 27px;
  pointer-events: none;
}

.route-style .caret {
  right: 35px;
}

.provider .caret {
  right: 9px;
}

.route-icon {
  position: absolute;
  top: 8px;
  left: 34px;
}

.row {
  display: flex;
  align-items: flex-start;
  gap: 68px;
}

.fields {
  display: flex;
  flex: 1;
  gap: 45px;
  min-width: 0;
}

.fields input {
  flex: 1;
  min-width: 0;
  height: 46px;
  padding: 2px 13px 0;
  border: none;
  border-radius: 12px;
  background: #272727;
  color: #a0a0a0;
  font-size: 21px;
}

.fields input::placeholder {
  color: #61676d;
}

.go {
  display: flex;
  align-items: center;
  justify-content: center;
  width: 56px;
  height: 45px;
  border: 1px solid #007bff;
  border-radius: 11px;
  background: #338cff;
}

.chips {
  display: flex;
  gap: 6px;
  padding: 1px 0 7px 7px;
}

.chips button {
  height: 42px;
  padding: 0 12px 0 14px;
  border: 1px solid #2c2c2c;
  border-radius: 11px;
  color: #949494;
  font-size: 17px;
  letter-spacing: 2px;
  white-space: nowrap;
}

.footer {
  margin-top: -12px;
  padding-top: 15px;
  border-top: 1px solid #303030;
  text-align: center;
}

.cancel {
  width: 157px;
  height: 43px;
  border-radius: 10px;
  background: #343a40;
  color: #a0a0a0;
  font-size: 18px;
}

/* Right dock */
.dock {
  width: 130px;
  flex: none;
  display: flex;
  flex-direction: column;
  overflow: hidden;
}

.dock .dock-head {
  padding-left: 37px;
}

.dock-columns {
  display: flex;
  flex: 1;
}

.dock-col {
  flex: 1;
  min-width: 0;
}

.dock-col.narrow {
  flex: none;
  width: 62px;
  border-right: 5px solid #3c3c3c;
}

.dock-cell {
  height: 62px;
  padding-top: 6px;
  border-bottom: 2px solid #3c3c3c;
}

.dock-cell .grip {
  width: 30px;
  margin-left: 14px;
}

.dock-col:last-child .grip {
  margin-left: 55px;
}

.dock-btn {
  display: flex;
  align-items: center;
  justify-content: center;
  width: 44px;
  height: 38px;
  margin: 4px 0 0 7px;
}

.dock-btn.pressed {
  border: 1px solid #757575;
  border-radius: 4px;
  background: #383838;
}

.dock-btn.labelled {
  width: auto;
  margin-left: 14px;
  gap: 15px;
  color: #fff;
  font-size: 14px;
  font-weight: 700;
}
```
